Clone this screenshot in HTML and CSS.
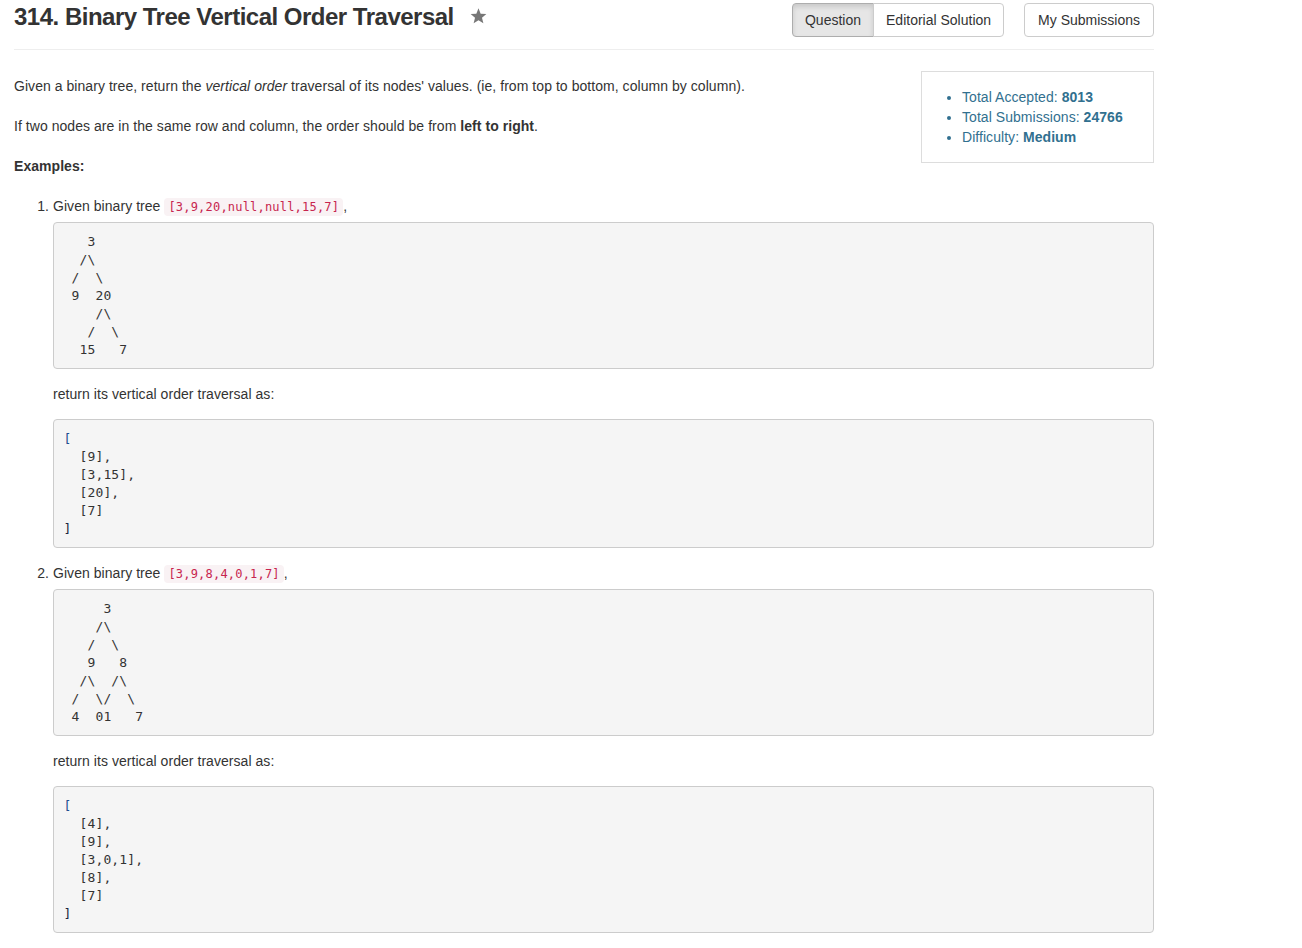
FILE: index.html
```html
<!DOCTYPE html>
<html>
<head>
<meta charset="utf-8">
<link rel="stylesheet" href="styles.css">
</head>
<body>
<div class="page">
  <header class="head">
    <h3 class="title">314. Binary Tree Vertical Order Traversal
      <svg class="star" width="17" height="16" viewBox="0 0 24 23"><path d="M12 0.5l3.1 7.6 8.2 0.6-6.3 5.3 2 8-7-4.4-7 4.4 2-8-6.3-5.3 8.2-0.6z" fill="#777"/></svg>
    </h3>
    <div class="tabs">
      <div class="btn-group">
        <span class="btn active">Question</span><span class="btn">Editorial Solution</span>
      </div>
      <span class="btn single">My Submissions</span>
    </div>
  </header>
  <div class="intro">
    <div class="desc">
      <p>Given a binary tree, return the <em>vertical order</em> traversal of its nodes' values. (ie, from top to bottom, column by column).</p>
      <p>If two nodes are in the same row and column, the order should be from <b>left to right</b>.</p>
      <p><b>Examples:</b></p>
    </div>
    <aside class="stats">
      <ul>
        <li>Total Accepted: <b>8013</b></li>
        <li>Total Submissions: <b>24766</b></li>
        <li>Difficulty: <b>Medium</b></li>
      </ul>
    </aside>
  </div>
  <ol class="examples">
    <li>
      <div class="given">Given binary tree <code>[3,9,20,null,null,15,7]</code>,</div>
<pre>   3
  /\
 /  \
 9  20
    /\
   /  \
  15   7</pre>
      <p class="ret">return its vertical order traversal as:</p>
<pre><span class="b">[</span>
  [9],
  [3,15],
  [20],
  [7]
<span class="e">]</span></pre>
    </li>
    <li>
      <div class="given">Given binary tree <code>[3,9,8,4,0,1,7]</code>,</div>
<pre>     3
    /\
   /  \
   9   8
  /\  /\
 /  \/  \
 4  01   7</pre>
      <p class="ret">return its vertical order traversal as:</p>
<pre><span class="b">[</span>
  [4],
  [9],
  [3,0,1],
  [8],
  [7]
<span class="e">]</span></pre>
    </li>
  </ol>
</div>
</body>
</html>
```
FILE: styles.css
```css
* { box-sizing: border-box; }
body {
  margin: 0;
  font-family: "Liberation Sans", Arial, sans-serif;
  font-size: 14px;
  line-height: 20px;
  color: #333;
  background: #fff;
  letter-spacing: 0.05px;
}
.page {
  width: 1140px;
  margin-left: 14px;
}
.head {
  display: flex;
  justify-content: space-between;
  align-items: flex-start;
  padding-top: 3px;
  height: 50px;
  border-bottom: 1px solid #eee;
}
.title {
  margin: 0;
  font-size: 24px;
  font-weight: bold;
  line-height: 28px;
  color: #333;
  letter-spacing: -0.5px;
  display: flex;
  align-items: center;
}
.star { margin-left: 16px; margin-top: -2px; }
.tabs { display: flex; gap: 20px; margin-top: 0; }
.btn-group { display: flex; }
.btn {
  display: inline-block;
  height: 34px;
  line-height: 32px;
  padding: 0 12px;
  border: 1px solid #ccc;
  background: #fff;
  color: #333;
  font-size: 14px;
  letter-spacing: 0;
}
.btn-group .btn:first-child { border-radius: 4px 0 0 4px; }
.btn-group .btn:last-child { border-radius: 0 4px 4px 0; margin-left: -1px; }
.btn.active {
  background: #e6e6e6;
  border-color: #adadad;
  box-shadow: inset 0 3px 5px rgba(0,0,0,.125);
}
.btn.single { border-radius: 4px; padding: 0 13px; }
.intro {
  display: flex;
  justify-content: space-between;
  align-items: flex-start;
  margin-top: 21px;
}
.desc p { margin: 0 0 20px; }
.desc p:first-child { margin-top: 5px; }
.desc p:last-child { margin-bottom: 0; }
.stats {
  width: 233px;
  border: 1px solid #ddd;
  padding: 15px 0;
  color: #31708f;
}
.stats ul { margin: 0; padding-left: 40px; }
.stats li { line-height: 20px; }
.examples {
  margin: 20px 0 0;
  padding-left: 39px;
}
.given { line-height: 20px; }
code {
  font-family: "DejaVu Sans Mono", Menlo, monospace;
  font-size: 12px;
  padding: 2px 4px;
  color: #c7254e;
  background: #f9f2f4;
  border-radius: 4px;
  letter-spacing: 0.2px;
}
pre {
  margin: 5px 0 15px;
  padding: 9.5px;
  font-family: "DejaVu Sans Mono", Menlo, monospace;
  font-size: 13px;
  line-height: 18px;
  color: #333;
  background: #f5f5f5;
  border: 1px solid #ccc;
  border-radius: 4px;
  letter-spacing: 0.15px;
}
pre .b { color: #1e4f91; }
pre .e { color: #1a2540; }
.ret { margin: 0 0 15px; }
```
